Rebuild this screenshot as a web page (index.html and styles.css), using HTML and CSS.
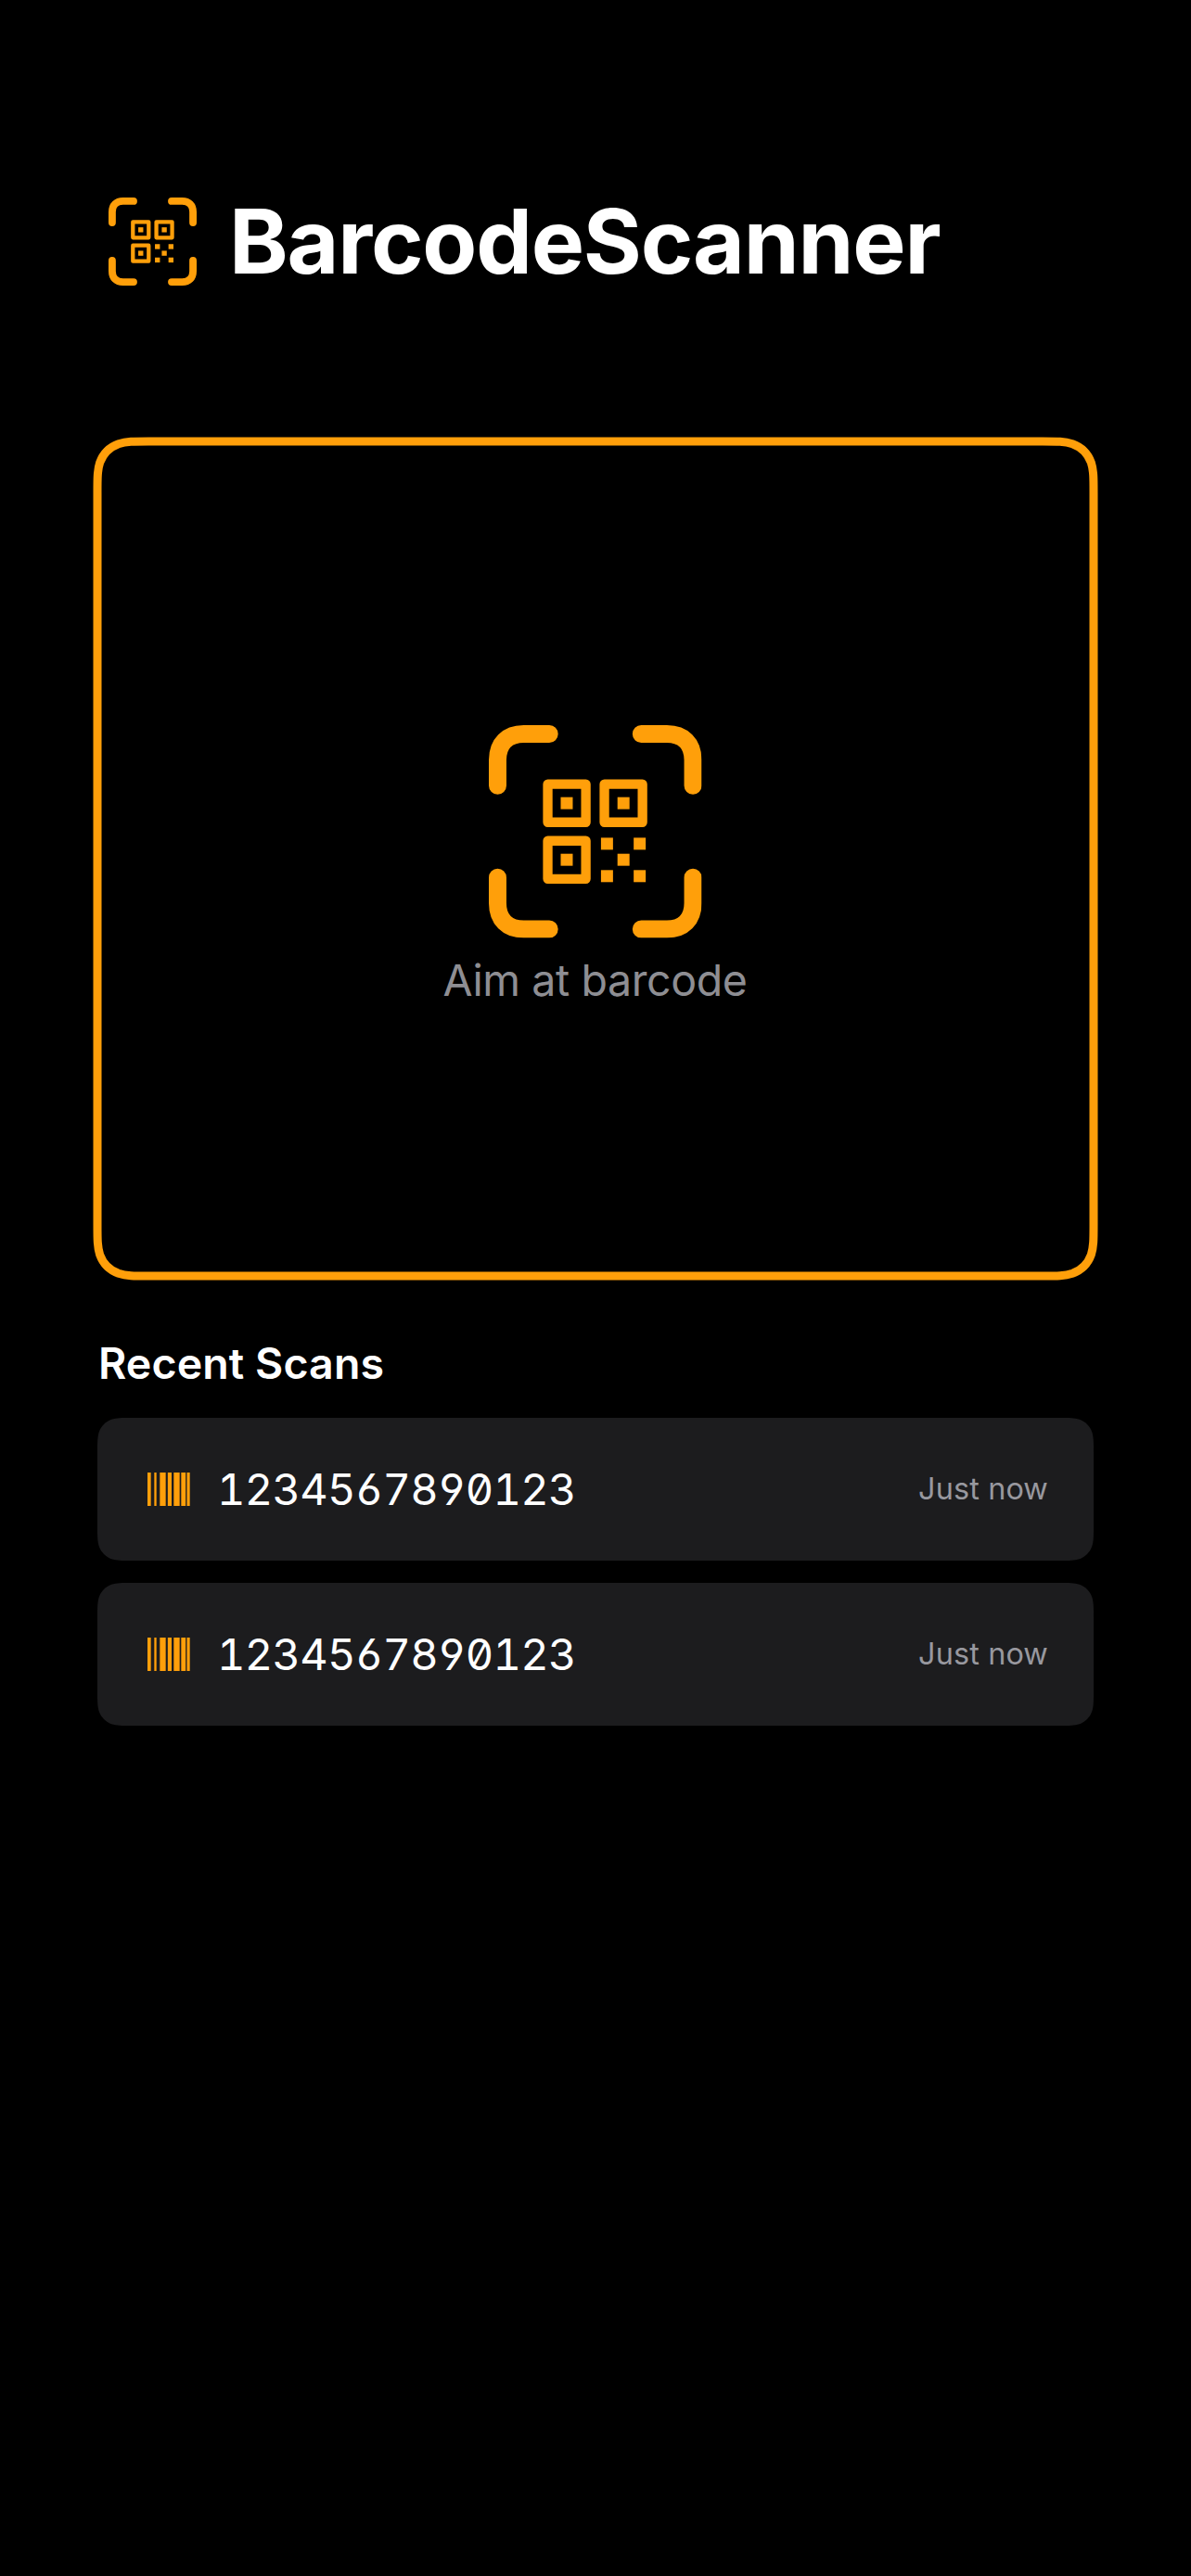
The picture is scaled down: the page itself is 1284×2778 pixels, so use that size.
FILE: index.html
```html
<!DOCTYPE html>
<html lang="en">
<head>
<meta charset="utf-8">
<title>BarcodeScanner</title>
<link rel="stylesheet" href="styles.css">
</head>
<body>
<svg class="defs" aria-hidden="true">
  <symbol id="qr-viewfinder" viewBox="0 0 690 690">
    <g fill="none" stroke="currentColor" stroke-width="57" stroke-linecap="round" stroke-linejoin="round">
      <path id="bracket" d="M28.5 196V113C28.5 60 60 28.500 113 28.500H196"/>
      <use href="#bracket" transform="matrix(-1 0 0 1 690 0)"/>
      <use href="#bracket" transform="matrix(1 0 0 -1 0 690)"/>
      <use href="#bracket" transform="matrix(-1 0 0 -1 690 690)"/>
    </g>
    <g fill="none" stroke="currentColor" stroke-width="31" stroke-linejoin="round">
      <rect x="191" y="191.500" width="123.500" height="123.500"/>
      <rect x="374.500" y="191.500" width="123.500" height="123.500"/>
      <rect x="191" y="375" width="123.500" height="123.500"/>
    </g>
    <g fill="currentColor">
      <rect x="233" y="233.500" width="39" height="39"/>
      <rect x="417" y="233.500" width="39" height="39"/>
      <rect x="233" y="417" width="39" height="39"/>
      <rect x="363.500" y="365" width="39" height="39"/>
      <rect x="469.500" y="365" width="39" height="39"/>
      <rect x="417" y="417" width="39" height="39"/>
      <rect x="363.500" y="470" width="39" height="39"/>
      <rect x="469.500" y="470" width="39" height="39"/>
    </g>
  </symbol>
  <symbol id="barcode" viewBox="0 0 138 108">
    <path fill="currentColor" d="M0 0h11v108H0zM22 0h7v108h-7zM40 0h19v108H40zM65.500 0h12.500v108H65.500zM85 0h19v108H85zM109 0h14.500v108H109zM127.500 0h9.500v108h-9.500z"/>
  </symbol>
</svg>

<main class="screen">
  <header class="header">
    <svg class="header-icon"><use href="#qr-viewfinder"/></svg>
    <h1 class="title">BarcodeScanner</h1>
  </header>

  <section class="scanner">
    <svg class="scanner-frame" viewBox="0 0 1074 900">
      <path fill="none" stroke="currentColor" stroke-width="9" d="M55.030 0H1018.970C1034.810 0 1042.740 0 1051.270 2.700C1060.580 6.090 1067.910 13.420 1071.300 22.730C1074 31.260 1074 39.190 1074 55.030V844.970C1074 860.810 1074 868.740 1071.300 877.270C1067.910 886.580 1060.580 893.910 1051.270 897.300C1042.740 900 1034.810 900 1018.970 900H55.030C39.190 900 31.260 900 22.730 897.300C13.420 893.910 6.090 886.580 2.700 877.270C0 868.740 0 860.810 0 844.970V55.030C0 39.190 0 31.260 2.700 22.730C6.090 13.420 13.420 6.090 22.730 2.700C31.260 0 39.190 0 55.030 0Z"/>
    </svg>
    <div class="scanner-hint">
      <svg class="scanner-icon"><use href="#qr-viewfinder"/></svg>
      <p class="hint-text">Aim at barcode</p>
    </div>
  </section>

  <section class="recent">
    <h2 class="recent-title">Recent Scans</h2>
    <ul class="scan-list">
      <li class="scan">
        <svg class="scan-icon"><use href="#barcode"/></svg>
        <span class="scan-code">1234567890123</span>
        <span class="scan-time">Just now</span>
      </li>
      <li class="scan">
        <svg class="scan-icon"><use href="#barcode"/></svg>
        <span class="scan-code">1234567890123</span>
        <span class="scan-time">Just now</span>
      </li>
    </ul>
  </section>
</main>
</body>
</html>
```
FILE: styles.css
```css
* {
  box-sizing: border-box;
  margin: 0;
  padding: 0;
}

body {
  background: #000;
  color: #fff;
  font-family: Inter, "Liberation Sans", sans-serif;
}

.defs {
  display: none;
}

.screen {
  min-height: 2778px;
  padding: 213px 105px 0;
}

.header {
  display: flex;
  align-items: center;
  gap: 35px;
  height: 95px;
  padding-left: 12px;
}

.header-icon {
  width: 95px;
  height: 95px;
  color: #ff9f0a;
}

.title {
  padding-bottom: 2px;
  font-size: 96.3px;
  font-weight: 700;
  line-height: 116px;
  letter-spacing: -1.2px;
}

.scanner {
  display: grid;
  place-items: center;
  height: 900px;
  margin-top: 168px;
}

.scanner-frame,
.scanner-hint {
  grid-area: 1 / 1;
}

.scanner-frame {
  width: 1074px;
  height: 900px;
  overflow: visible;
  color: #ff9f0a;
}

.scanner-hint {
  display: flex;
  flex-direction: column;
  align-items: center;
  gap: 17px;
  padding-top: 16px;
}

.scanner-icon {
  width: 229.5px;
  height: 229.5px;
  color: #ff9f0a;
}

.hint-text {
  padding-right: 1px;
  color: #8e8e93;
  font-size: 46.5px;
  line-height: 57px;
  letter-spacing: -0.4px;
}

.recent {
  margin-top: 66px;
}

.recent-title {
  padding-left: 1px;
  font-size: 46.5px;
  font-weight: 600;
  line-height: 57px;
  letter-spacing: 0.1px;
}

.scan-list {
  display: flex;
  flex-direction: column;
  gap: 24px;
  margin-top: 30px;
  list-style: none;
}

/* Continuous-curvature corners, 24px radius */
.scan {
  display: flex;
  align-items: center;
  height: 154px;
  padding: 0 49px 0 54px;
  background: #1c1c1e;
  clip-path: path("M36.690 0H1037.310C1047.880 0 1053.160 0 1058.840 1.800C1065.050 4.060 1069.940 8.950 1072.200 15.160C1074 20.840 1074 26.120 1074 36.690V117.310C1074 127.880 1074 133.160 1072.200 138.840C1069.940 145.050 1065.050 149.940 1058.840 152.200C1053.160 154 1047.880 154 1037.310 154H36.690C26.120 154 20.840 154 15.160 152.200C8.950 149.940 4.060 145.050 1.800 138.840C0 133.160 0 127.880 0 117.310V36.690C0 26.120 0 20.840 1.800 15.160C4.060 8.950 8.950 4.060 15.160 1.800C20.840 0 26.120 0 36.690 0Z");
}

.scan-icon {
  width: 46px;
  height: 36px;
  color: #ff9f0a;
}

.scan-code {
  margin-left: 29px;
  padding-bottom: 2px;
  font-size: 47px;
  letter-spacing: -0.73px;
  font-feature-settings: "tnum", "zero", "cv03", "cv04";
}

.scan-time {
  margin-left: auto;
  padding-bottom: 1px;
  color: #98989f;
  font-size: 32.4px;
  letter-spacing: 0.13px;
}
```
